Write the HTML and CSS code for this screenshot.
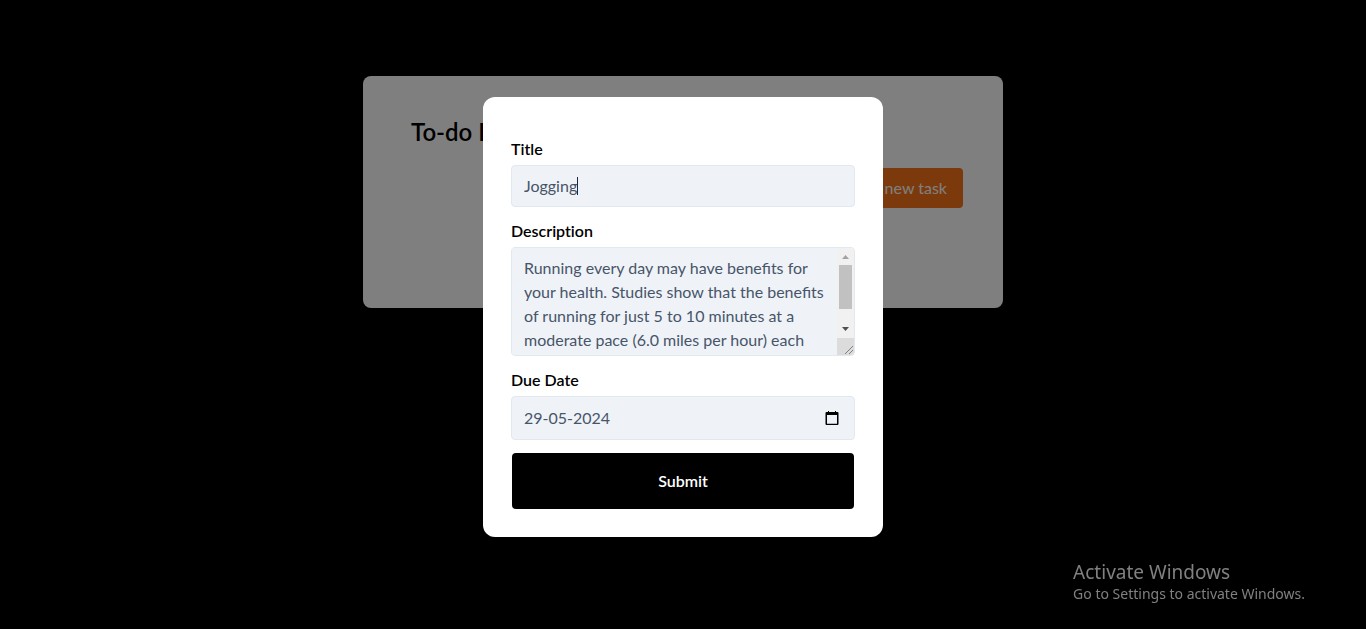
FILE: index.html
```html
<!DOCTYPE html>
<html lang="en">
<head>
<meta charset="utf-8">
<title>To-do List</title>
<link rel="stylesheet" href="styles.css">
</head>
<body>
<main class="page">
  <section class="card">
    <h1 class="card-title">To-do List</h1>
    <button class="add-button" type="button">Add new task</button>
  </section>
</main>
<div class="overlay">
  <form class="modal">
    <div class="field">
      <label for="title">Title</label>
      <div class="control">
        <input class="input" id="title" type="text" value="Jogging">
        <span class="caret"></span>
      </div>
    </div>
    <div class="field">
      <label for="description">Description</label>
      <div class="control">
        <textarea class="input textarea" id="description">Running every day may have benefits for your health. Studies show that the benefits of running for just 5 to 10 minutes at a moderate pace (6.0 miles per hour) each day may help</textarea>
        <svg class="scrollbar" viewBox="0 0 17 107" width="17" height="107" aria-hidden="true">
          <path d="M0 0h17v90H0z" fill="#f1f1f1"/>
          <path d="M2 17h13v44H2z" fill="#c1c1c1"/>
          <path d="M5 11l3.500-4 3.500 4z" fill="#a3a3a3"/>
          <path d="M5 79l3.500 4 3.500-4z" fill="#505050"/>
          <path d="M0 90h17v17H0z" fill="#dcdcdc"/>
          <path d="M8 106l8-8M12 106l4-4" stroke="#808080"/>
        </svg>
      </div>
    </div>
    <div class="field">
      <label for="due">Due Date</label>
      <div class="control">
        <input class="input date" id="due" type="text" inputmode="numeric" value="29-05-2024">
        <button class="picker" type="button" aria-label="Open calendar">
          <svg viewBox="0 0 16 16" width="16" height="16"><path d="M2.500 2H4V1h1v1h6V1h1v1h1.500q1 0 1 1v11q0 1-1 1h-11q-1 0-1-1V3q0-1 1-1zM3 5v8.800h10V5z" fill="#000" fill-rule="evenodd"/></svg>
        </button>
      </div>
    </div>
    <button class="submit" type="submit">Submit</button>
  </form>
</div>
<aside class="watermark">
  <p class="watermark-title">Activate Windows</p>
  <p class="watermark-text">Go to Settings to activate Windows.</p>
</aside>
</body>
</html>
```

FILE: styles.css
```css
* {
  box-sizing: border-box;
}

body {
  margin: 0;
  min-height: 100vh;
  background: #000;
  color: #000;
  font: 16px/24px Lato, sans-serif;
}

button,
input,
textarea {
  font: inherit;
}

.page {
  padding: 76px 24px;
}

.card {
  display: flex;
  flex-direction: column;
  max-width: 640px;
  min-height: 232px;
  margin: 0 auto;
  padding: 40px;
  border-radius: 8px;
  background: #fff;
}

.card-title {
  margin: 0 0 20px;
  padding-left: 8px;
  font-size: 24px;
  line-height: 32px;
  font-weight: 600;
}

.add-button {
  align-self: flex-end;
  padding: 8px 16px;
  border: 0;
  border-radius: 4px;
  background: #f97316;
  color: #fff;
}

.overlay {
  position: fixed;
  inset: 0;
  display: flex;
  align-items: center;
  justify-content: center;
  padding-top: 4px;
  background: rgba(0, 0, 0, 0.5);
}

.modal {
  display: flex;
  flex-direction: column;
  gap: 12px;
  width: 100%;
  max-width: 400px;
  padding: 40px 28px 28px;
  border-radius: 12px;
  background: #fff;
}

.field {
  display: flex;
  flex-direction: column;
  gap: 4px;
}

.field label {
  font-weight: 600;
  font-variant-ligatures: none;
}

.control {
  position: relative;
  display: flex;
}

.input {
  display: block;
  width: 100%;
  padding: 8px 12px;
  border: 1px solid #e2e8f0;
  border-radius: 4px;
  outline: 0;
  background: #eff3f8;
  color: #475569;
}

.caret {
  position: absolute;
  top: 12px;
  left: 66px;
  width: 1px;
  height: 18px;
  background: #1e293b;
}

.textarea {
  height: 109px;
  padding-right: 29px;
  overflow-y: auto;
  resize: none;
}

.scrollbar {
  position: absolute;
  top: 1px;
  right: 1px;
  border-radius: 0 3px 3px 0;
}

.date {
  padding-top: 9px;
  padding-bottom: 9px;
}

.picker {
  position: absolute;
  top: 14px;
  right: 15px;
  display: flex;
  padding: 0;
  border: 0;
  background: none;
}

.submit {
  margin: 1px 1px 0;
  padding: 16px;
  border: 0;
  border-radius: 4px;
  background: #000;
  color: #fff;
  font-weight: 600;
}

.watermark {
  position: fixed;
  right: 61px;
  bottom: 25px;
  color: #808080;
  font-family: "Noto Sans", sans-serif;
}

.watermark p {
  margin: 0;
}

.watermark-title {
  font-size: 19px;
}

.watermark-text {
  font-size: 14px;
  line-height: 20px;
}
```
